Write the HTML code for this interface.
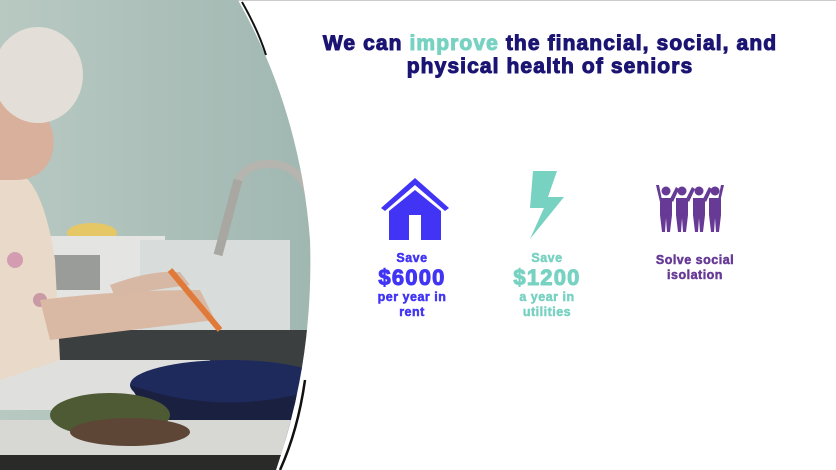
<!DOCTYPE html>
<html><head><meta charset="utf-8"><style>
body{margin:0;width:836px;height:470px;overflow:hidden;background:#fff;font-family:"Liberation Sans",Arial,sans-serif;position:relative}
.t{position:absolute;left:290px;width:520px;top:32px;text-align:center;font-weight:bold;font-size:21px;line-height:23px;color:#1b1472;letter-spacing:1.1px;-webkit-text-stroke:1px #1b1472}
.c{position:absolute;text-align:center;font-weight:bold;width:160px}
.s{font-size:12.5px;line-height:15px;letter-spacing:0.5px;-webkit-text-stroke:0.5px currentColor}
.b{font-size:22px;line-height:24px;letter-spacing:1.2px;-webkit-text-stroke:1px currentColor}
</style></head><body>
<svg width="836" height="470" style="position:absolute;left:0;top:0">
<defs><clipPath id="cp"><path d="M0 0 L238 0 Q300 110 310 240 Q314 360 276 470 L0 470 Z"/></clipPath>
<linearGradient id="wall" x1="0" y1="0" x2="1" y2="0"><stop offset="0" stop-color="#b8c9c2"/><stop offset="1" stop-color="#9fb6b0"/></linearGradient></defs>
<line x1="0" y1="0.5" x2="836" y2="0.5" stroke="#ccc"/>
<g clip-path="url(#cp)">
<rect width="330" height="470" fill="url(#wall)"/>
<ellipse cx="92" cy="233" rx="25" ry="10" fill="#e6c766"/>
<rect x="25" y="236" width="140" height="95" fill="#e4e4e2"/>
<rect x="40" y="255" width="60" height="35" fill="#9a9c9a"/>
<rect x="140" y="240" width="150" height="90" fill="#d8dcda"/>
<rect x="0" y="330" width="330" height="40" fill="#3b3f3f"/>
<rect x="0" y="360" width="210" height="50" fill="#dfe0de"/>
<path d="M238 180 Q250 160 280 165 Q305 172 310 200" stroke="#b5b4ae" stroke-width="8" fill="none"/>
<path d="M238 180 L218 255" stroke="#a8a7a2" stroke-width="9"/>
<ellipse cx="230" cy="385" rx="100" ry="25" fill="#1f2a5c"/>
<path d="M130 385 Q230 420 330 385 L330 440 Q230 450 150 420Z" fill="#1a2040"/>
<rect x="0" y="420" width="330" height="50" fill="#d7d8d4"/>
<ellipse cx="110" cy="415" rx="60" ry="22" fill="#4e5a33"/>
<ellipse cx="130" cy="432" rx="60" ry="14" fill="#5e4637"/>
<rect x="0" y="455" width="330" height="15" fill="#2a2a28"/>
<path d="M0 170 Q40 160 55 260 L60 360 L0 380Z" fill="#e8d9c8"/>
<circle cx="15" cy="260" r="8" fill="#d39cb0"/>
<circle cx="40" cy="300" r="7" fill="#c99aa6"/>
<path d="M40 300 Q120 290 200 290 L215 320 Q130 330 50 340Z" fill="#d9b9a4"/>
<path d="M110 285 Q150 270 180 272 L190 285 Q150 290 115 297Z" fill="#d6b8a4"/>
<path d="M170 270 L220 330" stroke="#e07a3a" stroke-width="6"/>
<path d="M0 100 Q30 95 48 120 Q58 140 50 160 Q40 180 15 180 L0 180Z" fill="#d8b09c"/>
<ellipse cx="38" cy="75" rx="45" ry="48" fill="#e3dfd8"/>
</g>
<path d="M242 2 Q258 30 266 55" stroke="#111" stroke-width="2" fill="none"/>
<path d="M305 380 Q298 430 280 470" stroke="#111" stroke-width="2.5" fill="none"/>
<path d="M381 208 L415 178 L449 208 L445 211 L415 185 L385 211Z" fill="#4134f5"/>
<path d="M389 211 L415 190 L441 211 L441 240 L421 240 L421 215 L409 215 L409 240 L389 240Z" fill="#4134f5"/>
<path d="M533 171 L557 171 L548 197 L564 197 L530 239 L544 208 L530 208Z" fill="#78d2c2"/>
<g fill="#673a96">
<g id="p"><circle cx="666" cy="191" r="4.5"/><path d="M660 198 L672 198 L672 215 L670 232 L667 232 L666 218 L665 232 L662 232 L660 215Z"/></g>
<use href="#p" x="16"/><use href="#p" x="33"/><use href="#p" x="49"/>
<path d="M656 185 L659 185 L662 200 L660 202Z M721 185 L724 185 L720 202 L718 200Z"/>
<path d="M670 199 L676 187 L679 189 L673 202Z M686 199 L692 187 L695 189 L689 202Z M703 199 L709 187 L712 189 L706 202Z"/>
</g>
</svg>
<div class="t">We can <span style="color:#78d2c2;-webkit-text-stroke-color:#78d2c2">improve</span> the financial, social, and<br>physical health of seniors</div>
<div class="c" style="left:332px;top:251px;color:#4134f5"><div class="s">Save</div><div class="b">$6000</div><div class="s">per year in<br>rent</div></div>
<div class="c" style="left:467px;top:251px;color:#78d2c2"><div class="s">Save</div><div class="b">$1200</div><div class="s">a year in<br>utilities</div></div>
<div class="c" style="left:615px;top:253px;color:#673a96"><div class="s">Solve social<br>isolation</div></div>
</body></html>
